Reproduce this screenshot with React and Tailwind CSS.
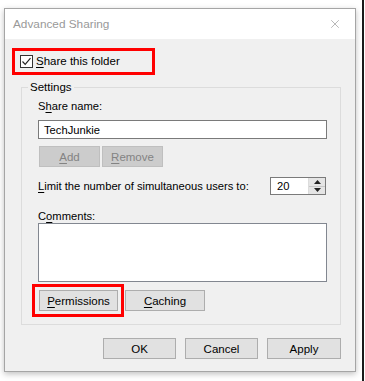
import { X } from "lucide-react";

const Mn = ({ children }) => <span className="underline underline-offset-[2px]">{children}</span>;

const WinButton = ({ children, disabled, className = "" }) => (
  <button
    className={
      "h-[21px] border text-[11.5px] leading-[14px] " +
      (disabled
        ? "bg-[#cccccc] border-[#bfbfbf] text-[#838383] "
        : "bg-[#e1e1e1] border-[#adadad] text-black ") +
      className
    }
  >
    {children}
  </button>
);

export default function App() {
  return (
    <div className="relative w-[365px] h-[381px] bg-white overflow-hidden font-['Liberation_Sans',Arial,sans-serif] text-[11.2px] text-black whitespace-nowrap">
      <div className="absolute right-[1px] top-0 h-full w-[2px] bg-[#1a1a1a]" />

      {/* Fenster */}
      <div className="ml-[4px] mt-[8px] w-[352px] h-[364px] border border-[#a5a5a5] bg-[#f0f0f0] shadow-[0_2px_6px_rgba(0,0,0,0.25)] flex flex-col">
        {/* Titelleiste */}
        <div className="h-[30px] bg-white flex items-center justify-between pl-[8px] pr-[8px]">
          <span className="text-[11.8px] text-[#999999] mt-[1px]">Advanced Sharing</span>
          <X className="w-[14px] h-[14px] text-[#9a9a9a] mr-[5px]" strokeWidth={1.2} />
        </div>

        {/* Inhalt */}
        <div className="flex flex-col flex-1">
          <div className="mt-[9px] ml-[7px] w-[143px] h-[27px] border-[3px] border-[#ff0000] flex items-center pl-[5px]">
            <span className="w-[13px] h-[13px] border border-[#333333] bg-white flex items-center justify-center">
              <svg width="11" height="11" viewBox="0 0 11 11">
                <path d="M1.5 5.5 L4.2 8.3 L9.5 2.2" fill="none" stroke="#222" strokeWidth="1.2" />
              </svg>
            </span>
            <span className="ml-[3px] text-[11.5px]">
              <Mn>S</Mn>hare this folder
            </span>
          </div>

          <fieldset className="mt-[4px] ml-[16px] w-[320px] border border-[#dcdcdc]">
            <legend className="ml-[6px] px-[2px] leading-[16px] text-[11.5px]">Settings</legend>
            <div className="pl-[16px] pr-[13px] pb-[7px] flex flex-col">
              <span className="mt-[3px] leading-[16px]">
                S<Mn>h</Mn>are name:
              </span>
              <div className="mt-[6px] h-[19px] border border-[#7a7a7a] bg-white flex items-center pl-[5px] leading-[14px]">
                TechJunkie
              </div>
              <div className="mt-[7px] flex gap-[2px] pl-[1px]">
                <WinButton disabled className="w-[61px]">
                  <Mn>A</Mn>dd
                </WinButton>
                <WinButton disabled className="w-[61px]">
                  <Mn>R</Mn>emove
                </WinButton>
              </div>
              <div className="mt-[10px] h-[18px] flex items-center justify-between">
                <span>
                  <Mn>L</Mn>imit the number of simultaneous users to:
                </span>
                <div className="flex h-[18px] border border-[#7a7a7a] bg-white mr-[1px]">
                  <span className="w-[37px] pl-[6px] flex items-center leading-[14px]">20</span>
                  <div className="w-[17px] flex flex-col border-l border-[#dcdcdc] bg-[#e5e5e5]">
                    <div className="flex-1 flex items-center justify-center border-b border-[#c8c8c8]">
                      <svg width="7" height="4" viewBox="0 0 7 4">
                        <path d="M0 4 L3.5 0 L7 4 Z" fill="#222" />
                      </svg>
                    </div>
                    <div className="flex-1 flex items-center justify-center">
                      <svg width="7" height="4" viewBox="0 0 7 4">
                        <path d="M0 0 L3.5 4 L7 0 Z" fill="#222" />
                      </svg>
                    </div>
                  </div>
                </div>
              </div>
              <span className="mt-[14px] leading-[14px]">
                C<Mn>o</Mn>mments:
              </span>
              <div className="h-[59px] border border-[#828790] bg-white" />
              <div className="mt-[2px] flex items-center">
                <div className="-ml-[6px] border-[3px] border-[#ff0000] pl-[4px] pr-[3px] py-[3px]">
                  <WinButton className="w-[79px] block">
                    <Mn>P</Mn>ermissions
                  </WinButton>
                </div>
                <WinButton className="ml-[1px] w-[80px]">
                  <Mn>C</Mn>aching
                </WinButton>
              </div>
            </div>
          </fieldset>

          <div className="mt-[13px] pr-[14px] flex justify-end gap-[9px]">
            <WinButton className="w-[73px]">OK</WinButton>
            <WinButton className="w-[73px]">Cancel</WinButton>
            <WinButton className="w-[74px]">Apply</WinButton>
          </div>
        </div>
      </div>
    </div>
  );
}
